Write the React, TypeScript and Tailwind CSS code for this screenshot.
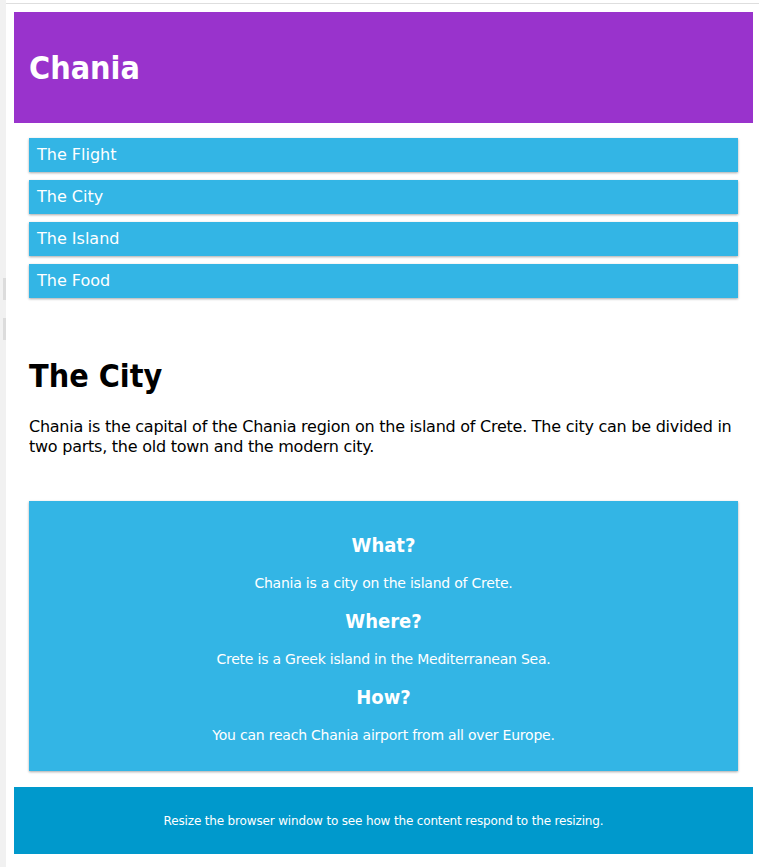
const menu = ['The Flight', 'The City', 'The Island', 'The Food'];

const facts = [
	{ q: 'What?', a: 'Chania is a city on the island of Crete.' },
	{ q: 'Where?', a: 'Crete is a Greek island in the Mediterranean Sea.' },
	{ q: 'How?', a: 'You can reach Chania airport from all over Europe.' },
];

export default function App() {
	return (
		<div className="flex min-h-[867px] bg-white font-['DejaVu_Sans',Verdana,sans-serif]">
			<div className="flex w-[6px] shrink-0 flex-col bg-[#f1f1f1]">
				<div className="mt-[278px] ml-[3px] h-[22px] w-[3px] bg-[#dcdcdc]" />
				<div className="mt-[18px] ml-[3px] h-[22px] w-[3px] bg-[#dcdcdc]" />
			</div>

			<div className="flex-1">
				<div className="mt-[3px] h-px bg-[#dedede]" />

				<div className="pl-[8px] pr-[6px] pt-[8px]">
					<header className="flex h-[111px] items-center bg-[#9933cc] px-[15px]">
						<h1 className="font-['DejaVu_Sans_Condensed','DejaVu_Sans',sans-serif] text-[32px] font-bold text-white">
							Chania
						</h1>
					</header>

					<div className="px-[15px]">
						<nav className="mt-[15px] flex flex-col gap-[8px]">
							{menu.map((item) => (
								<div
									key={item}
									className="flex h-[34px] items-center bg-[#33b5e5] px-[8px] text-[16px] text-white shadow-[0_1px_3px_rgba(0,0,0,0.12),0_1px_2px_rgba(0,0,0,0.24)]"
								>
									{item}
								</div>
							))}
						</nav>

						<h2 className="mt-[58px] font-['DejaVu_Sans_Condensed','DejaVu_Sans',sans-serif] text-[32px] leading-[40px] font-bold text-black">
							The City
						</h2>

						<p className="mt-[21px] text-[16px] leading-[20px] tracking-[-0.25px] text-black">
							Chania is the capital of the Chania region on the island of Crete.
							The city can be divided in two parts, the old town and the modern
							city.
						</p>

						<aside className="mt-[44px] flex h-[270px] flex-col items-center bg-[#33b5e5] pt-[30px] text-white shadow-[0_1px_3px_rgba(0,0,0,0.12),0_1px_2px_rgba(0,0,0,0.24)]">
							{facts.map((f) => (
								<div key={f.q} className="flex flex-col items-center">
									<h3 className="h-[28px] font-['DejaVu_Sans_Condensed','DejaVu_Sans',sans-serif] text-[20px] leading-[28px] font-bold">
										{f.q}
									</h3>
									<p className="mt-[10px] mb-[10px] h-[28px] text-[14px] leading-[28px] tracking-[-0.22px]">
										{f.a}
									</p>
								</div>
							))}
						</aside>
					</div>

					<footer className="mt-[16px] flex h-[67px] items-center justify-center bg-[#0099cc] text-[12px] tracking-[-0.16px] text-white">
						Resize the browser window to see how the content respond to the resizing.
					</footer>
				</div>
			</div>
		</div>
	);
}
